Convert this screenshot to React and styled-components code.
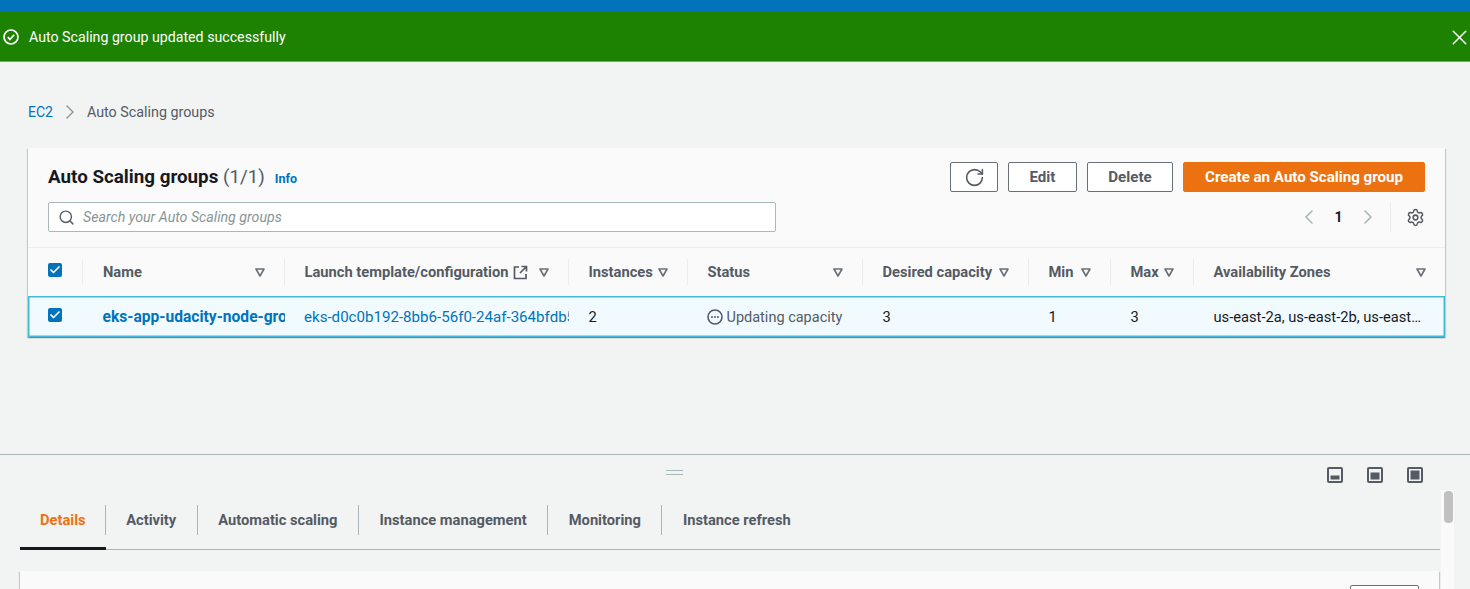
import React from "react";
import styled, { createGlobalStyle } from "styled-components";
import { ChevronLeft, ChevronRight, X, Search, RotateCw, Settings, Check } from "lucide-react";

const GlobalStyle = createGlobalStyle`
  * { box-sizing: border-box; }
  html, body { margin: 0; padding: 0; height: 100%; overflow: hidden; }
  body {
    background: #f2f3f3;
    color: #16191f;
    font-family: Roboto, "Liberation Sans", sans-serif;
    font-size: 14.7px;
  }
`;

const columns = [
  { label: "Name", cell: "eks-app-udacity-node-group-2021", kind: "name" },
  { label: "Launch template/configuration", cell: "eks-d0c0b192-8bb6-56f0-24af-364bfdb5a1c2", kind: "link", external: true },
  { label: "Instances", cell: "2" },
  { label: "Status", cell: "Updating capacity", kind: "status" },
  { label: "Desired capacity", cell: "3" },
  { label: "Min", cell: "1" },
  { label: "Max", cell: "3" },
  { label: "Availability Zones", cell: "us-east-2a, us-east-2b, us-east-2c", kind: "ellipsis" },
];

const tabs = ["Details", "Activity", "Automatic scaling", "Instance management", "Monitoring", "Instance refresh"];

function SortIcon() {
  return (
    <SortSvg viewBox="0 0 10 9" aria-hidden="true">
      <path d="M1 1h8L5 8z" fill="none" stroke="#687078" strokeWidth="1.6" strokeLinejoin="round" />
    </SortSvg>
  );
}

function PanelIcon({ fill }) {
  return (
    <svg width="16" height="16" viewBox="0 0 16 16" aria-hidden="true">
      <rect x="1" y="1" width="14" height="14" rx="1" fill="none" stroke="#545b64" strokeWidth="2" />
      <rect x="3.5" y={12.5 - fill} width="9" height={fill} fill="#545b64" />
    </svg>
  );
}

function Cell({ column }) {
  if (column.kind === "name") return <NameLink>{column.cell}</NameLink>;
  if (column.kind === "link") return <TemplateLink>{column.cell}</TemplateLink>;
  if (column.kind === "status") {
    return (
      <StatusText>
        <svg width="16" height="16" viewBox="0 0 16 16" aria-hidden="true">
          <circle cx="8" cy="8" r="7" fill="none" stroke="#545b64" strokeWidth="1.6" />
          <circle cx="5" cy="8" r="1" fill="#545b64" />
          <circle cx="8" cy="8" r="1" fill="#545b64" />
          <circle cx="11" cy="8" r="1" fill="#545b64" />
        </svg>
        {column.cell}
      </StatusText>
    );
  }
  if (column.kind === "ellipsis") return <Ellipsis>{column.cell}</Ellipsis>;
  return <span>{column.cell}</span>;
}

export default function App() {
  return (
    <Page>
      <GlobalStyle />
      <TopBar />
      <Flash>
        <FlashMessage>
          <svg width="16" height="16" viewBox="0 0 16 16" aria-hidden="true">
            <circle cx="8" cy="8" r="7" fill="none" stroke="#fff" strokeWidth="1.7" />
            <path d="M4.8 8.2l2.2 2.2 4.2-4.6" fill="none" stroke="#fff" strokeWidth="1.7" />
          </svg>
          Auto Scaling group updated successfully
        </FlashMessage>
        <FlashClose>
          <X size={25} color="#fff" strokeWidth={1.4} />
        </FlashClose>
      </Flash>

      <Main>
        <Breadcrumbs>
          <CrumbLink>EC2</CrumbLink>
          <ChevronRight size={24} color="#879596" strokeWidth={1.4} />
          <span>Auto Scaling groups</span>
        </Breadcrumbs>

        <Card>
          <CardHeader>
            <TitleRow>
              <Title>
                Auto Scaling groups <Count>(1/1)</Count>
              </Title>
              <InfoLink>Info</InfoLink>
              <Actions>
                <Button $icon>
                  <RotateCw size={21} strokeWidth={1.8} />
                </Button>
                <Button $width={69}>Edit</Button>
                <Button $width={86}>Delete</Button>
                <PrimaryButton>Create an Auto Scaling group</PrimaryButton>
              </Actions>
            </TitleRow>
            <SearchRow>
              <SearchBox>
                <Search size={17} color="#545b64" strokeWidth={2} />
                <SearchInput placeholder="Search your Auto Scaling groups" readOnly />
              </SearchBox>
              <Pager>
                <ChevronLeft size={24} color="#aab7b8" strokeWidth={1.6} />
                <PageNumber>1</PageNumber>
                <ChevronRight size={24} color="#aab7b8" strokeWidth={1.6} />
              </Pager>
              <SettingsSlot>
                <Settings size={19} color="#545b64" strokeWidth={1.9} />
              </SettingsSlot>
            </SearchRow>
          </CardHeader>

          <HeadRow>
            <CheckCell $divider>
              <CheckBox $lift={4}><Check size={12} color="#fff" strokeWidth={3.5} /></CheckBox>
            </CheckCell>
            {columns.map((c) => (
              <HeadCell key={c.label}>
                <HeadLabel>
                  {c.label}
                  {c.external && (
                    <svg width="15" height="15" viewBox="0 0 15 15" aria-hidden="true">
                      <path d="M6 2H1.5v11.5H13V9M8.5 1.5h5v5M13.5 1.5L7 8" fill="none" stroke="#545b64" strokeWidth="1.7" />
                    </svg>
                  )}
                </HeadLabel>
                <SortIcon />
              </HeadCell>
            ))}
          </HeadRow>

          <BodyRow>
            <CheckCell>
              <CheckBox $lift={3}><Check size={12} color="#fff" strokeWidth={3.5} /></CheckBox>
            </CheckCell>
            {columns.map((c) => (
              <BodyCell key={c.label} $link={c.kind === "name" || c.kind === "link"}>
                <Cell column={c} />
              </BodyCell>
            ))}
          </BodyRow>
        </Card>
      </Main>

      <SplitPanel>
        <DragHandle />
        <PanelIcons>
          <PanelIcon fill={4} />
          <PanelIcon fill={7} />
          <PanelIcon fill={9} />
        </PanelIcons>
        <PanelBody>
          <PanelContent>
            <TabList>
              {tabs.map((t, i) => (
                <Tab key={t} $active={i === 0}>
                  <TabLabel $active={i === 0} $last={i === tabs.length - 1}>{t}</TabLabel>
                </Tab>
              ))}
            </TabList>
            <DetailCard>
              <DetailButton />
            </DetailCard>
          </PanelContent>
          <ScrollTrack>
            <ScrollThumb />
          </ScrollTrack>
        </PanelBody>
      </SplitPanel>
    </Page>
  );
}

const Page = styled.div`
  display: flex;
  flex-direction: column;
  height: 589px;
  overflow: hidden;
`;

const TopBar = styled.div`
  height: 12px;
  flex: none;
  background: #0073bb;
`;

const Flash = styled.div`
  height: 50px;
  flex: none;
  background: #1d8102;
  border-bottom: 1px solid #8d9a92;
  display: flex;
  align-items: center;
  justify-content: space-between;
  padding: 1px 0 0 3px;
  color: #fff;
`;

const FlashMessage = styled.div`
  display: flex;
  align-items: center;
  gap: 10px;
  font-size: 14.2px;
`;

const FlashClose = styled.span`
  display: flex;
  margin-right: -2px;
`;

const Main = styled.main`
  flex: 1;
  min-height: 0;
  padding: 0 25px 0 28px;
`;

const Breadcrumbs = styled.nav`
  height: 86px;
  padding-top: 14px;
  display: flex;
  align-items: center;
  gap: 5px;
  color: #545b64;
  font-size: 14.3px;
`;

const CrumbLink = styled.a`
  color: #0073bb;
  font-size: 14px;
`;

const Card = styled.section`
  background: #fafafa;
  box-shadow: 0 1px 1px rgba(0, 28, 36, 0.3), 1px 1px 1px rgba(0, 28, 36, 0.15), -1px 1px 1px rgba(0, 28, 36, 0.15);
`;

const CardHeader = styled.div`
  height: 100px;
  padding: 14px 20px 0;
  display: flex;
  flex-direction: column;
  gap: 10px;
  border-bottom: 1px solid #eaeded;
`;

const TitleRow = styled.div`
  display: flex;
  align-items: center;
  height: 30px;
`;

const Title = styled.h1`
  margin: 0;
  font-size: 18.8px;
  font-weight: 700;
`;

const Count = styled.span`
  font-weight: 400;
  color: #545b64;
`;

const InfoLink = styled.a`
  margin: 3px 0 0 10px;
  font-size: 12.5px;
  font-weight: 700;
  color: #0073bb;
`;

const Actions = styled.div`
  margin-left: auto;
  display: flex;
  gap: 10px;
`;

const Button = styled.button`
  height: 30px;
  width: ${(p) => (p.$icon ? "48px" : `${p.$width}px`)};
  padding: 0;
  display: flex;
  align-items: center;
  justify-content: center;
  background: #fff;
  border: 1px solid #687078;
  border-radius: 2px;
  color: #545b64;
  font: 700 15.1px Roboto, sans-serif;
`;

const PrimaryButton = styled.button`
  height: 30px;
  width: 242px;
  padding: 0;
  background: #ec7211;
  border: 1px solid #ec7211;
  border-radius: 2px;
  color: #fff;
  font: 700 15.1px Roboto, sans-serif;
`;

const SearchRow = styled.div`
  display: flex;
  align-items: center;
  height: 30px;
`;

const SearchBox = styled.div`
  width: 728px;
  height: 30px;
  display: flex;
  align-items: center;
  gap: 8px;
  padding-left: 9px;
  background: #fff;
  border: 1px solid #aab7b8;
  border-radius: 2px;
`;

const SearchInput = styled.input`
  flex: 1;
  border: 0;
  outline: 0;
  background: transparent;
  padding: 0;
  font: italic 400 14.2px Roboto, sans-serif;
  &::placeholder { color: #879596; opacity: 1; }
`;

const Pager = styled.div`
  margin-left: auto;
  display: flex;
  align-items: center;
  gap: 12.5px;
  padding-right: 10px;
`;

const PageNumber = styled.span`
  width: 10px;
  text-align: center;
  font-weight: 700;
  font-size: 14px;
`;

const SettingsSlot = styled.div`
  height: 30px;
  padding-left: 15px;
  display: flex;
  align-items: center;
  border-left: 1px solid #eaeded;
`;

const gridColumns = "55px 201.5px 284px 119px 175px 166px 82px 83px 1fr";

const HeadRow = styled.div`
  display: grid;
  grid-template-columns: ${gridColumns};
  height: 48px;
  align-items: center;
`;

const BodyRow = styled.div`
  display: grid;
  grid-template-columns: ${gridColumns};
  height: 41px;
  align-items: center;
  background: #f1faff;
  box-shadow: inset 0 0 0 1.5px #44b9d6;
`;

const CheckCell = styled.div`
  height: 26px;
  padding-left: 20px;
  display: flex;
  align-items: center;
  border-right: ${(p) => (p.$divider ? "1px solid #eaeded" : "0")};
`;

const CheckBox = styled.span`
  width: 14px;
  height: 14px;
  margin-bottom: ${(p) => p.$lift}px;
  display: flex;
  align-items: center;
  justify-content: center;
  background: #0073bb;
  border-radius: 2px;
`;

const HeadCell = styled.div`
  height: 26px;
  padding: 0 19px 0 20px;
  display: flex;
  align-items: center;
  justify-content: space-between;
  border-right: 1px solid #eaeded;
  color: #545b64;
  font-weight: 700;
  font-size: 14.7px;
  &:last-child { border-right: 0; padding-right: 19px; }
`;

const HeadLabel = styled.span`
  display: flex;
  align-items: center;
  gap: 5px;
  white-space: nowrap;
`;

const SortSvg = styled.svg`
  width: 10px;
  height: 9px;
  flex: none;
`;

const BodyCell = styled.div`
  padding: 1px 0 0 ${(p) => (p.$link ? "19.5px" : "20px")};
  overflow: hidden;
  white-space: nowrap;
  font-size: ${(p) => (p.$link ? "15.1px" : "14.7px")};
  &:last-child { padding-right: 20px; }
`;

const NameLink = styled.a`
  color: #0073bb;
  font-weight: 700;
  font-size: 15.6px;
`;

const TemplateLink = styled.a`
  color: #0073bb;
`;

const StatusText = styled.span`
  display: flex;
  align-items: center;
  gap: 4px;
  margin-left: -1px;
  color: #545b64;
  font-size: 14.5px;
`;

const Ellipsis = styled.span`
  display: block;
  overflow: hidden;
  text-overflow: ellipsis;
`;

const SplitPanel = styled.section`
  position: relative;
  height: 135px;
  flex: none;
  border-top: 1px solid #aab7b8;
  padding-top: 35px;
`;

const DragHandle = styled.div`
  position: absolute;
  left: 666px;
  top: 15px;
  width: 17px;
  height: 5px;
  border-top: 1px solid #aab7b8;
  border-bottom: 1px solid #aab7b8;
`;

const PanelIcons = styled.div`
  position: absolute;
  top: 12px;
  right: 47px;
  display: flex;
  gap: 24px;
`;

const PanelBody = styled.div`
  display: flex;
  height: 100px;
  overflow: hidden;
`;

const PanelContent = styled.div`
  width: 1440px;
  padding-left: 20px;
`;

const TabList = styled.div`
  height: 60px;
  display: flex;
  border-bottom: 1px solid #aab7b8;
`;

const Tab = styled.div`
  display: flex;
  align-items: center;
  height: 60px;
  padding-top: ${(p) => (p.$active ? "3px" : "0")};
  border-bottom: ${(p) => (p.$active ? "3px solid #16191f" : "0")};
`;

const TabLabel = styled.span`
  display: block;
  height: 30px;
  line-height: 30px;
  padding: ${(p) => (p.$active ? "0 19px 0 20px" : "0 20.5px")};
  border-right: ${(p) => (p.$last ? "0" : "1px solid #aab7b8")};
  color: ${(p) => (p.$active ? "#ec7211" : "#545b64")};
  font-weight: 700;
  font-size: 14.7px;
`;

const DetailCard = styled.div`
  height: 40px;
  margin: 21px 1px 0 0;
  position: relative;
  background: #fafafa;
  box-shadow: 0 1px 1px rgba(0, 28, 36, 0.3), 1px 1px 1px rgba(0, 28, 36, 0.15), -1px 1px 1px rgba(0, 28, 36, 0.15);
`;

const DetailButton = styled.div`
  position: absolute;
  top: 14px;
  right: 20px;
  width: 69px;
  height: 30px;
  background: #fff;
  border: 1px solid #687078;
  border-radius: 2px;
`;

const ScrollTrack = styled.div`
  width: 13px;
  margin-left: 1px;
  background: #fafafa;
  padding: 1px 1px 0 3px;
`;

const ScrollThumb = styled.div`
  height: 32px;
  background: #c1c1c1;
  border-radius: 4px;
`;
